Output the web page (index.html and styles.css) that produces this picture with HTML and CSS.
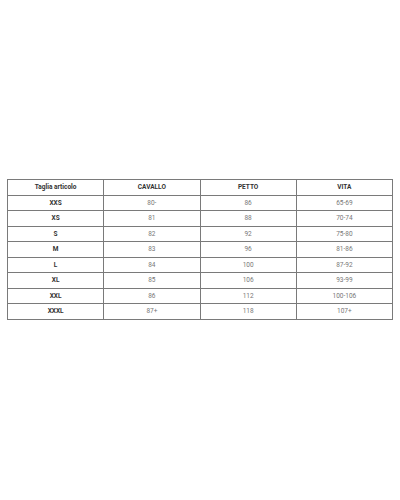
FILE: index.html
```html
<!DOCTYPE html>
<html lang="it">
<head>
<meta charset="utf-8">
<link rel="stylesheet" href="styles.css">
</head>
<body>
<div class="page">
<table class="size-table">
<thead>
<tr><th>Taglia articolo</th><th>CAVALLO</th><th>PETTO</th><th>VITA</th></tr>
</thead>
<tbody>
<tr><th>XXS</th><td>80-</td><td>86</td><td>65-69</td></tr>
<tr><th>XS</th><td>81</td><td>88</td><td>70-74</td></tr>
<tr><th>S</th><td>82</td><td>92</td><td>75-80</td></tr>
<tr><th>M</th><td>83</td><td>96</td><td>81-86</td></tr>
<tr><th>L</th><td>84</td><td>100</td><td>87-92</td></tr>
<tr><th>XL</th><td>85</td><td>106</td><td>93-99</td></tr>
<tr><th>XXL</th><td>86</td><td>112</td><td>100-106</td></tr>
<tr><th>XXXL</th><td>87+</td><td>118</td><td>107+</td></tr>
</tbody>
</table>
</div>
</body>
</html>
```
FILE: styles.css
```css
html, body {
  margin: 0;
  padding: 0;
  background: #fff;
}
.page {
  width: 400px;
  height: 500px;
  padding: 179px 0 0 7px;
  box-sizing: border-box;
}
.size-table {
  width: 386px;
  border-collapse: collapse;
  table-layout: fixed;
  font-family: Roboto, "Liberation Sans", sans-serif;
  font-size: 6.5px;
}
.size-table th,
.size-table td {
  border: 1px solid #7a7a7a;
  height: 14.5px;
  padding: 0;
  text-align: center;
  vertical-align: middle;
}
.size-table th {
  font-weight: 700;
  color: #333;
}
.size-table td {
  font-weight: 400;
  color: #777;
}
```
